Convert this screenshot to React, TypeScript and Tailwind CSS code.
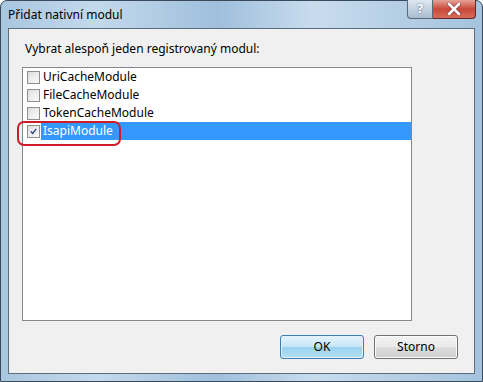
import React from "react";

const font = { fontFamily: '"Segoe UI", "Noto Sans", "Liberation Sans", sans-serif' };

function Checkbox({ checked }: { checked?: boolean }) {
  return (
    <div className="w-[13px] h-[13px] border border-[#8e8f8f] bg-gradient-to-br from-[#dcdcdc] to-[#fbfbfb] flex items-center justify-center shrink-0 p-[2px]">
      <div className="w-full h-full bg-gradient-to-br from-[#e6e6e6] to-[#f6f6f6] flex items-center justify-center">
        {checked && (
          <svg width="9" height="9" viewBox="0 0 9 9">
            <path d="M1 4.5 L3.5 7 L8 1.2" fill="none" stroke="#2a3f7a" strokeWidth="1.7" />
          </svg>
        )}
      </div>
    </div>
  );
}

const items = ["UriCacheModule", "FileCacheModule", "TokenCacheModule", "IsapiModule"];

export default function App() {
  return (
    <div className="w-[483px] h-[382px] relative overflow-hidden" style={font}>
      <div className="absolute inset-0 rounded-t-[7px] border border-[#3b4a5a] bg-[linear-gradient(90deg,#a9c6e0_0%,#c3d9ec_20%,#9fbfdc_45%,#c8dcee_65%,#b3cde4_85%,#a5c3de_100%)] flex flex-col">
        <div className="h-[27px] flex items-center pl-[7px] relative">
          <span className="text-[12px] text-black">Přidat nativní modul</span>
          <div className="absolute right-[6px] top-[-1px] flex">
            <div className="w-[26px] h-[19px] rounded-bl-[4px] border border-[#5a6a7c] border-t-0 bg-gradient-to-b from-[#dfe9f3] to-[#a8bccf] flex items-center justify-center text-[13px] font-bold text-white [text-shadow:0_0_2px_#44556a]">
              ?
            </div>
            <div className="w-[43px] h-[19px] rounded-br-[4px] border border-l-0 border-[#5a2a2a] border-t-0 bg-gradient-to-b from-[#e4a196] via-[#c8473a] to-[#d86a5a] flex items-center justify-center">
              <svg width="14" height="12" viewBox="0 0 14 12">
                <path d="M2 1 L12 11 M12 1 L2 11" stroke="#3a1a1a" strokeWidth="4" strokeLinecap="round" opacity="0.5" />
                <path d="M2 1 L12 11 M12 1 L2 11" stroke="#ffffff" strokeWidth="2.6" strokeLinecap="round" />
              </svg>
            </div>
          </div>
        </div>
        <div className="flex-1 mx-[7px] mb-[7px] border border-[#5e6d7c] bg-[#f0f0f0] flex flex-col pl-[13px] pr-[16px] pt-[12px] pb-[14px]">
          <div className="text-[12px] leading-[16px] text-black pl-[3px]">Vybrat alespoň jeden registrovaný modul:</div>
          <div className="mt-[10px] w-[390px] h-[254px] border border-[#828790] bg-white pl-[2px] relative">
            {items.map((it, i) => {
              const sel = i === 3;
              return (
                <div key={it} className="h-[18px] flex items-center">
                  <div className="w-[16px] flex justify-center">
                    <Checkbox checked={sel} />
                  </div>
                  <div className={`flex-1 h-[18px] flex items-center pl-[2px] text-[12px] ${sel ? "bg-[#3399ff] text-white" : "text-black"}`}>
                    {it}
                  </div>
                </div>
              );
            })}
            <div className="absolute left-[-6px] top-[53px] w-[104px] h-[25px] rounded-[7px] border-2 border-[#d01c2a]" />
          </div>
          <div className="flex-1" />
          <div className="flex justify-end gap-[10px]">
            <button className="w-[84px] h-[24px] rounded-[3px] border border-[#3c7fb1] bg-[linear-gradient(#e5f4fc_0%,#c4e5f6_50%,#98d1ef_51%,#b6dff4_100%)] text-[12px] text-black shadow-[inset_0_0_0_1px_#e0f2fb]">
              OK
            </button>
            <button className="w-[84px] h-[24px] rounded-[3px] border border-[#707070] bg-[linear-gradient(#f2f2f2_0%,#ebebeb_50%,#dddddd_51%,#cfcfcf_100%)] text-[12px] text-black shadow-[inset_0_0_0_1px_#fcfcfc]">
              Storno
            </button>
          </div>
        </div>
      </div>
    </div>
  );
}
